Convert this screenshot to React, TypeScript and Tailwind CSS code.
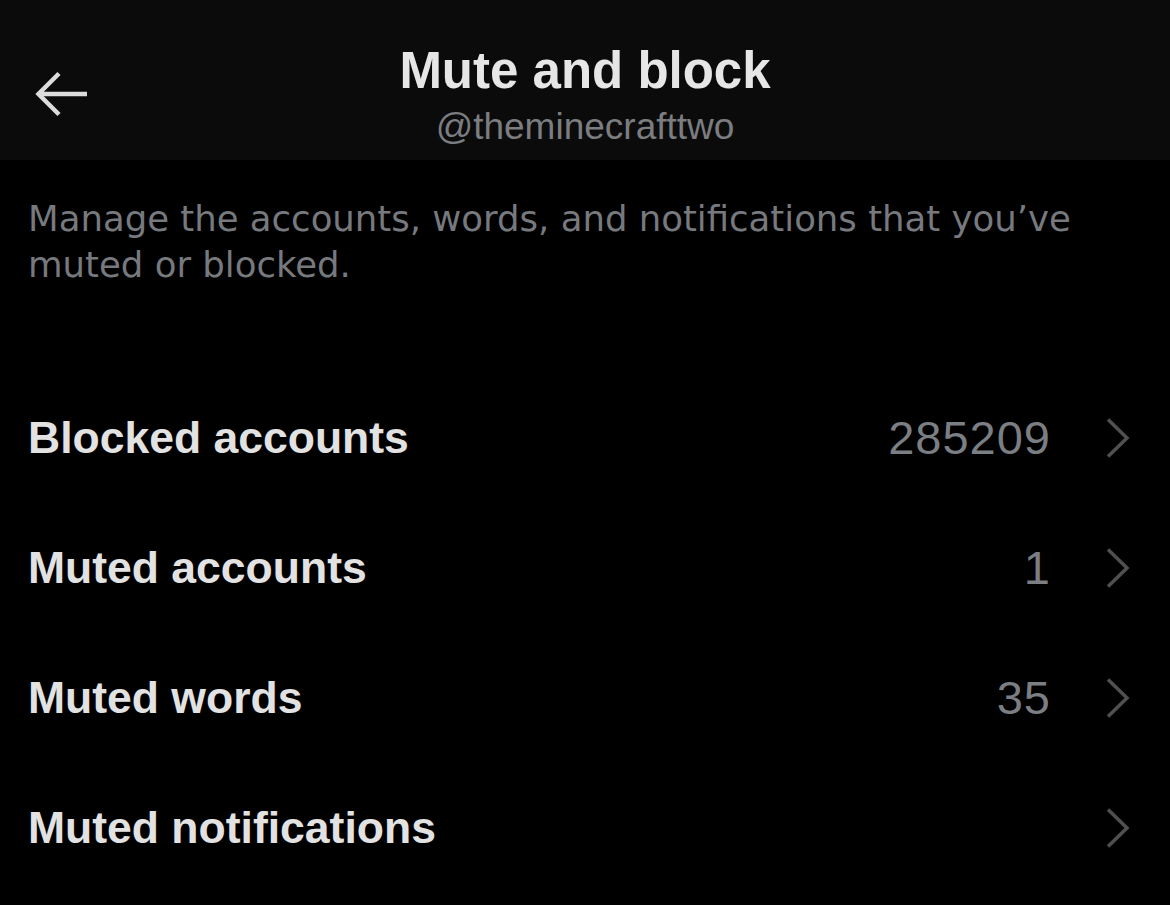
import React from "react";

const rows = [
  { label: "Blocked accounts", value: "285209" },
  { label: "Muted accounts", value: "1" },
  { label: "Muted words", value: "35" },
  { label: "Muted notifications", value: "" },
];

function BackArrow() {
  return (
    <svg width="56" height="48" viewBox="0 0 56 48" fill="none" className="block">
      <path d="M54 24H6" stroke="#dcdcdc" strokeWidth="4.5" />
      <path d="M26 3.5L5.5 24L26 44.5" stroke="#dcdcdc" strokeWidth="4.5" />
    </svg>
  );
}

function Chevron() {
  return (
    <svg width="24" height="40" viewBox="0 0 24 40" fill="none" className="block">
      <path d="M2 1.5L21 20L2 38.5" stroke="#4f5052" strokeWidth="3.5" />
    </svg>
  );
}

export default function App() {
  return (
    <div className="min-h-[905px] bg-black font-['Liberation_Sans',Arial,sans-serif] text-[#e3e3e3]">
      {/* header */}
      <header className="grid h-[160px] grid-cols-[1fr_auto_1fr] bg-[#0b0b0b]">
        <div className="flex items-start pl-[33px] pt-[70px]">
          <BackArrow />
        </div>
        <div className="flex flex-col items-center pt-[41px]">
          <h1 className="text-[51px] font-bold leading-[60px] text-[#e6e6e6]">Mute and block</h1>
          <p className="mt-[4px] text-[37px] leading-[44px] text-[#7b7d80]">@theminecrafttwo</p>
        </div>
        <div />
      </header>

      <p className="mt-[36px] whitespace-nowrap pl-[28px] font-['DejaVu_Sans',sans-serif] text-[35.5px] leading-[46px] text-[#76797d]">
        Manage the accounts, words, and notifications that you’ve
        <br />
        muted or blocked.
      </p>

      <ul className="mt-[85px]">
        {rows.map((r) => (
          <li key={r.label} className="flex h-[130px] items-center pl-[28px] pr-[40px]">
            <span className="flex-1 text-[44.5px] font-bold leading-[52px] text-[#e2e2e2]">{r.label}</span>
            <span className="mr-[55px] text-[47px] leading-[52px] tracking-[1px] text-[#7b7e82]">{r.value}</span>
            <Chevron />
          </li>
        ))}
      </ul>
    </div>
  );
}
